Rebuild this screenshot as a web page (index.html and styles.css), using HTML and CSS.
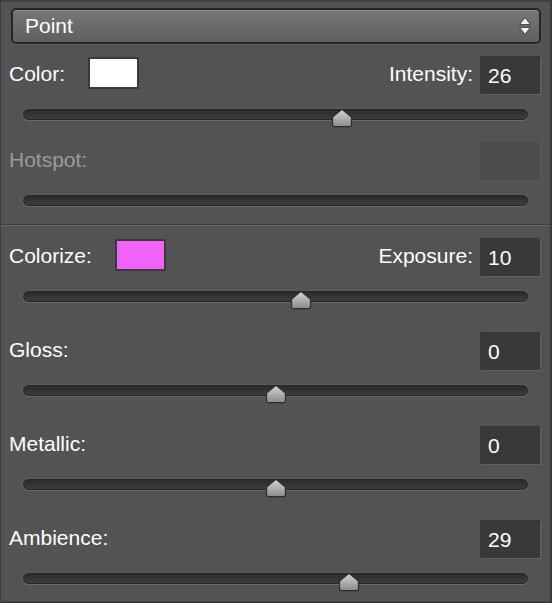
FILE: index.html
```html
<!DOCTYPE html>
<html>
<head>
<meta charset="utf-8">
<link rel="stylesheet" href="styles.css">
</head>
<body>
<div class="panel">
  <section class="sec sec-top">
    <div class="select">
      <span class="select-text">Point</span>
      <svg class="select-arrows" width="12" height="18" viewBox="0 0 12 18">
        <path d="M6 0.6 L11.4 7.6 H0.6 Z" fill="#f4f4f4" stroke="#2e2e2e" stroke-width="0.8" stroke-linejoin="round"/>
        <path d="M0.6 10.4 H11.4 L6 17.4 Z" fill="#f4f4f4" stroke="#2e2e2e" stroke-width="0.8" stroke-linejoin="round"/>
      </svg>
    </div>

    <div class="row">
      <div class="left"><span class="label">Color:</span><span class="swatch swatch-white"></span></div>
      <div class="right"><span class="label">Intensity:</span><span class="num">26</span></div>
    </div>
    <div class="slider s48"><div class="track"><svg class="thumb" style="left:63.2%" width="22" height="20" viewBox="0 0 22 20"><defs><linearGradient id="g1" x1="0" y1="0" x2="0" y2="1"><stop offset="0" stop-color="#d6d6d6"/><stop offset="1" stop-color="#8a8a8a"/></linearGradient></defs><path d="M11 1.2 L19.6 8.4 Q20.5 9.2 20.5 10.4 V16.5 Q20.5 18.6 18.4 18.6 H3.6 Q1.5 18.6 1.5 16.5 V10.4 Q1.5 9.2 2.4 8.4 Z" fill="url(#g1)" stroke="#2c2c2c" stroke-width="1.2"/></svg></div></div>

    <div class="row">
      <div class="left"><span class="label disabled">Hotspot:</span></div>
      <div class="right"><span class="num num-disabled"></span></div>
    </div>
    <div class="slider s44"><div class="track"></div></div>
  </section>

  <section class="sec sec-bottom">
    <div class="row">
      <div class="left"><span class="label">Colorize:</span><span class="swatch swatch-pink"></span></div>
      <div class="right"><span class="label">Exposure:</span><span class="num">10</span></div>
    </div>
    <div class="slider s56"><div class="track"><svg class="thumb" style="left:55.0%" width="22" height="20" viewBox="0 0 22 20"><defs><linearGradient id="g2" x1="0" y1="0" x2="0" y2="1"><stop offset="0" stop-color="#d6d6d6"/><stop offset="1" stop-color="#8a8a8a"/></linearGradient></defs><path d="M11 1.2 L19.6 8.4 Q20.5 9.2 20.5 10.4 V16.5 Q20.5 18.6 18.4 18.6 H3.6 Q1.5 18.6 1.5 16.5 V10.4 Q1.5 9.2 2.4 8.4 Z" fill="url(#g2)" stroke="#2c2c2c" stroke-width="1.2"/></svg></div></div>

    <div class="row">
      <div class="left"><span class="label">Gloss:</span></div>
      <div class="right"><span class="num">0</span></div>
    </div>
    <div class="slider s56"><div class="track"><svg class="thumb" style="left:50.1%" width="22" height="20" viewBox="0 0 22 20"><defs><linearGradient id="g3" x1="0" y1="0" x2="0" y2="1"><stop offset="0" stop-color="#d6d6d6"/><stop offset="1" stop-color="#8a8a8a"/></linearGradient></defs><path d="M11 1.2 L19.6 8.4 Q20.5 9.2 20.5 10.4 V16.5 Q20.5 18.6 18.4 18.6 H3.6 Q1.5 18.6 1.5 16.5 V10.4 Q1.5 9.2 2.4 8.4 Z" fill="url(#g3)" stroke="#2c2c2c" stroke-width="1.2"/></svg></div></div>

    <div class="row">
      <div class="left"><span class="label">Metallic:</span></div>
      <div class="right"><span class="num">0</span></div>
    </div>
    <div class="slider s56"><div class="track"><svg class="thumb" style="left:50.1%" width="22" height="20" viewBox="0 0 22 20"><defs><linearGradient id="g4" x1="0" y1="0" x2="0" y2="1"><stop offset="0" stop-color="#d6d6d6"/><stop offset="1" stop-color="#8a8a8a"/></linearGradient></defs><path d="M11 1.2 L19.6 8.4 Q20.5 9.2 20.5 10.4 V16.5 Q20.5 18.6 18.4 18.6 H3.6 Q1.5 18.6 1.5 16.5 V10.4 Q1.5 9.2 2.4 8.4 Z" fill="url(#g4)" stroke="#2c2c2c" stroke-width="1.2"/></svg></div></div>

    <div class="row">
      <div class="left"><span class="label">Ambience:</span></div>
      <div class="right"><span class="num">29</span></div>
    </div>
    <div class="slider s-last"><div class="track"><svg class="thumb" style="left:64.6%" width="22" height="20" viewBox="0 0 22 20"><defs><linearGradient id="g5" x1="0" y1="0" x2="0" y2="1"><stop offset="0" stop-color="#d6d6d6"/><stop offset="1" stop-color="#8a8a8a"/></linearGradient></defs><path d="M11 1.2 L19.6 8.4 Q20.5 9.2 20.5 10.4 V16.5 Q20.5 18.6 18.4 18.6 H3.6 Q1.5 18.6 1.5 16.5 V10.4 Q1.5 9.2 2.4 8.4 Z" fill="url(#g5)" stroke="#2c2c2c" stroke-width="1.2"/></svg></div></div>
  </section>
</div>
</body>
</html>
```

FILE: styles.css
```css
html, body {
  margin: 0;
  padding: 0;
  background: #535353;
}

.panel {
  box-sizing: border-box;
  width: 552px;
  height: 603px;
  background: #535353;
  border-top: 2px solid #404040;
  border-left: 1px solid #3c3c3c;
  border-right: 2px solid #3c3c3c;
  border-bottom: 2px solid #3c3c3c;
  font-family: "Liberation Sans", Arial, sans-serif;
  font-size: 21px;
  color: #ffffff;
  overflow: hidden;
}

.sec-top {
  padding-top: 6px;
  border-bottom: 1px solid #3a3a3a;
}

.sec-bottom {
  border-top: 1px solid #686868;
  padding-top: 12px;
}

.select {
  box-sizing: border-box;
  height: 36px;
  margin: 0 9px 12px 10px;
  border: 2px solid #262626;
  border-radius: 5px;
  background: linear-gradient(#777777, #5f5f5f);
  box-shadow: inset 0 1px 0 #8a8a8a, 0 1px 0 #646464;
  display: flex;
  align-items: center;
  justify-content: space-between;
  padding: 0 8px 0 12px;
}

.select-text {
  font-size: 21px;
  line-height: 1;
  margin-top: -2px;
}

.select-arrows {
  display: block;
}

.row {
  height: 38px;
  display: flex;
  align-items: center;
  justify-content: space-between;
  padding: 0 9px 0 8px;
}

.left, .right {
  display: flex;
  align-items: center;
}

.left .swatch {
  margin-left: 23px;
}

.right .label {
  margin-right: 7px;
}

.label {
  line-height: 1;
  margin-top: -3px;
}

.label.disabled {
  color: #9b9b9b;
}

.swatch {
  box-sizing: border-box;
  width: 51px;
  height: 32px;
  border: 2px solid #3a3a3a;
  margin-top: -4px;
}

.swatch-white {
  background: #ffffff;
}

.swatch-pink {
  background: #f062f8;
}

.num {
  box-sizing: border-box;
  width: 61px;
  height: 39px;
  background: #393939;
  border: 1px solid #363636;
  border-right-color: #626262;
  border-bottom-color: #626262;
  padding-left: 7px;
  display: flex;
  align-items: center;
  line-height: 1;
}

.num-disabled {
  background: #4b4b4b;
  border-color: #4b4b4b #5a5a5a #5a5a5a #4b4b4b;
}

.slider {
  box-sizing: border-box;
  padding: 15px 22px 0 22px;
}

.s48 { height: 48px; }
.s44 { height: 44px; }
.s56 { height: 56px; }
.s-last { height: 43px; }

.track {
  position: relative;
  box-sizing: border-box;
  height: 11px;
  border-radius: 6px;
  border: 1px solid #252525;
  background: linear-gradient(#2b2b2b, #3d3d3d);
  box-shadow: 0 1px 0 #6a6a6a, 0 0 0 1px #5c5c5c;
}

.thumb {
  position: absolute;
  top: -2px;
  transform: translateX(-50%);
  display: block;
}
```
